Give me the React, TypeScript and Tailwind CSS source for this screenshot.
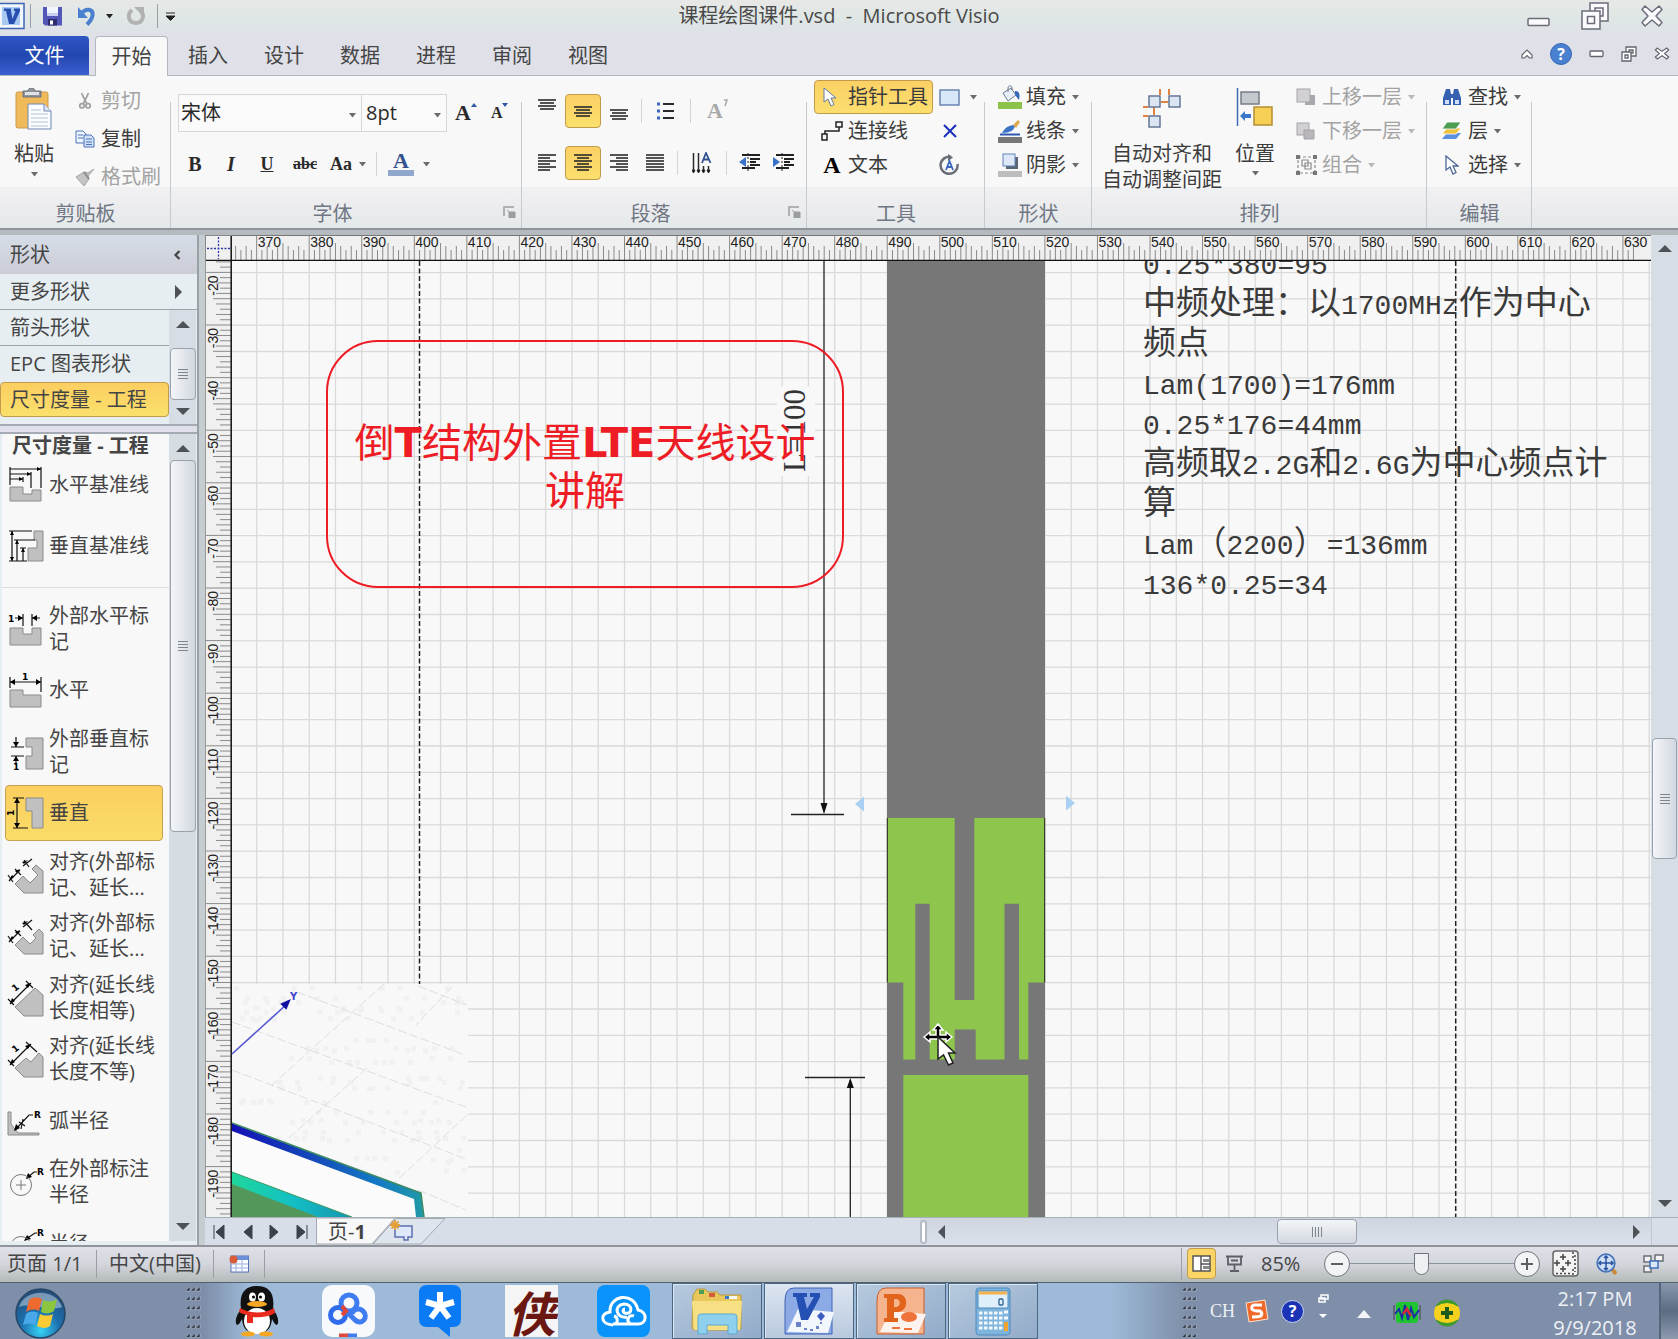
import type { ReactNode } from "react";

const uiFont = "font-['Open_Sans','Noto_Sans_CJK_SC',sans-serif]";
const serif = "'Liberation Serif', 'Noto Sans CJK SC', serif";

const H_UNIT = 5.255;
const V_UNIT = 5.26;
const rulerX = (v: number) => 309.2 + (v - 380) * H_UNIT;
const rulerY = (v: number) => 272.4 + (v - 20) * V_UNIT;
const range = (from: number, to: number) => Array.from({ length: to - from + 1 }, (_, i) => from + i);
const tickLength = (v: number) => (v % 10 === 0 ? 26 : v % 5 === 0 ? 18 : v % 2 === 0 ? 15 : 11);

function Caret({ className = "text-[#6b6b6b]" }: { className?: string }) {
  return (
    <svg width="7" height="5" viewBox="0 0 7 5" className={className}>
      <path d="M0 0H7L3.5 4.5Z" fill="currentColor" />
    </svg>
  );
}

function Arrow({ dir }: { dir: "up" | "down" | "left" | "right" }) {
  const paths = {
    up: "M0 10L7 3L14 10Z",
    down: "M0 4L7 11L14 4Z",
    left: "M10 0L3 7L10 14Z",
    right: "M4 0L11 7L4 14Z",
  };
  return (
    <svg width="14" height="14" viewBox="0 0 14 14" className="shrink-0">
      <path d={paths[dir]} fill="#4e5156" />
    </svg>
  );
}

/* ---------- title bar and tabs ---------- */

function TitleBar() {
  return (
    <header className="relative flex h-9 shrink-0 items-start justify-between bg-linear-to-b from-[#e8e8e6] via-[#dfe7e5] to-[#dfe0e8]">
      <div className="flex h-8 items-center">
        <svg width="26" height="28" viewBox="0 0 26 28">
          <rect x="-2" y="1.5" width="26" height="25" fill="#f3f7fd" stroke="#3c66b4" strokeWidth="1.5" />
          <rect x="2" y="5" width="18" height="18" fill="#a9c8f2" />
          <path d="M4 6.500H11V9L12.500 17L15.500 9H14V6.500H20V9L14 22H9L6 9H4Z" fill="#274fb0" />
        </svg>
        <span className="ml-1 h-6 w-px bg-[#9a9da3]" />
        <button type="button" aria-label="Save" className="ml-3">
          <svg width="19" height="20" viewBox="0 0 19 20">
            <path d="M0 1H19V19.500H2L0 17.500Z" fill="#5357b8" />
            <rect x="4" y="1" width="11" height="9" fill="#f4f6fd" />
            <rect x="4" y="7" width="11" height="3" fill="#c9cff0" />
            <rect x="5" y="13" width="9" height="6.500" fill="#2c2c6e" />
            <rect x="7" y="14.500" width="3" height="4" fill="#fff" />
          </svg>
        </button>
        <button type="button" aria-label="Undo" className="ml-4">
          <svg width="18" height="20" viewBox="0 0 18 20">
            <path d="M3.500 7.500C8 1.500 15.500 3 14.500 9.500C14 13.500 11.500 16 9 18.500" fill="none" stroke="#4a80cf" strokeWidth="4" />
            <path d="M0 1V12H10Z" fill="#4a80cf" />
          </svg>
        </button>
        <span className="ml-2.5">
          <Caret className="text-[#222]" />
        </span>
        <button type="button" aria-label="Repeat" disabled className="ml-3.5">
          <svg width="18" height="20" viewBox="0 0 18 20">
            <path d="M5 4C-1 9 2 17 9 17C16 17 18 9 13.500 5" fill="none" stroke="#b2b2b2" strokeWidth="4" />
            <path d="M7 1H17V9L12 6Z" fill="#b2b2b2" />
          </svg>
        </button>
        <span className="ml-3 h-6 w-px bg-[#9a9da3]" />
        <svg width="9" height="9" viewBox="0 0 9 9" className="ml-2">
          <path d="M0 1H9M0 4H9L4.500 8.500Z" fill="#222" stroke="#222" />
        </svg>
      </div>
      <h1 className="absolute left-1/2 top-1 -translate-x-1/2 whitespace-pre text-[20px] leading-6 text-[#4a4a4a]">
        课程绘图课件.vsd&nbsp; -&nbsp; Microsoft Visio
      </h1>
      <div className="flex h-8 items-center gap-[31px] pr-3.5">
        <button type="button" aria-label="Minimize">
          <svg width="23" height="26" viewBox="0 0 23 26">
            <rect x="1" y="15.500" width="21" height="7" rx="1" fill="#fbfbfd" stroke="#6b6c7a" strokeWidth="1.500" />
          </svg>
        </button>
        <button type="button" aria-label="Restore">
          <svg width="28" height="28" viewBox="0 0 28 28" fill="#fbfbfd" stroke="#6b6c7a" strokeWidth="1.500">
            <path d="M9 1H27V19H9Z" />
            <path d="M14 6H22V14H14Z" />
            <path d="M1 9H19V27H1Z" />
            <path d="M6.500 14.500H13.500V21.500H6.500Z" />
          </svg>
        </button>
        <button type="button" aria-label="Close">
          <svg width="24" height="24" viewBox="0 0 24 24">
            <path d="M5 2L12 8L19 2L22 5.500L16 12L22 18.500L19 22L12 16L5 22L2 18.500L8 12L2 5.500Z" fill="#fbfbfd" stroke="#6b6c7a" strokeWidth="1.500" strokeLinejoin="round" />
          </svg>
        </button>
      </div>
    </header>
  );
}

const tabs = ["插入", "设计", "数据", "进程", "审阅", "视图"];

function TabRow() {
  return (
    <nav className="flex h-10 shrink-0 items-stretch justify-between border-b border-[#b3b8c0] bg-[#dfe0e8] text-[20px] text-[#454545]">
      <div className="flex">
        <button type="button" className="mr-1.5 w-[89px] rounded-tr bg-linear-to-b from-[#2f56c6] via-[#2247b0] to-[#3a5fd0] leading-none text-white">
          文件
        </button>
        <button type="button" className="-mb-px mr-0.5 w-[73px] rounded-t border border-b-0 border-[#b3b8c0] bg-[#f8f8f8] leading-none">
          开始
        </button>
        {tabs.map((tab) => (
          <button key={tab} type="button" className="w-[76px] leading-none">
            {tab}
          </button>
        ))}
      </div>
      <div className="flex items-center gap-[17px] pb-1 pr-2">
        <button type="button" aria-label="Collapse ribbon">
          <svg width="12" height="10" viewBox="0 0 12 10">
            <path d="M1 6L6 1L11 6V9H8.500L6 6.500L3.500 9H1Z" fill="#fff" stroke="#63646e" strokeWidth="1.200" />
          </svg>
        </button>
        <button type="button" aria-label="Help" className="flex h-[22px] w-[22px] items-center justify-center rounded-full border border-[#3567b5] bg-[#4a80d0] text-base font-bold leading-none text-white">
          ?
        </button>
        <svg width="15" height="8" viewBox="0 0 15 8">
          <rect x="1" y="1" width="13" height="5.500" rx="1" fill="#fff" stroke="#63646e" strokeWidth="1.300" />
        </svg>
        <svg width="16" height="16" viewBox="0 0 16 16" fill="#fff" stroke="#63646e" strokeWidth="1.300">
          <path d="M5 1H15V10H5Z" />
          <path d="M8 4H12V7H8Z" />
          <path d="M1 6H10V15H1Z" />
          <path d="M4 9H7V12H4Z" />
        </svg>
        <svg width="16" height="13" viewBox="0 0 24 24" preserveAspectRatio="none">
          <path d="M5 2L12 8L19 2L22 5.500L16 12L22 18.500L19 22L12 16L5 22L2 18.500L8 12L2 5.500Z" fill="#fff" stroke="#63646e" strokeWidth="2" />
        </svg>
      </div>
    </nav>
  );
}

/* ---------- ribbon ---------- */

function Group({ label, width, launcher, children }: { label: string; width: string; launcher?: boolean; children: ReactNode }) {
  return (
    <section className={`relative flex shrink-0 flex-col after:absolute after:bottom-0 after:right-0 after:top-[26px] after:w-px after:bg-[#c6cad0] ${width}`}>
      <div className="relative z-10 min-h-0 flex-1">{children}</div>
      <div
        className={`relative flex h-[41px] shrink-0 items-center justify-center bg-linear-to-b from-[#f0f1f3] via-[#ececee] to-[#e3e9ea] pt-3 text-[20px] leading-6 text-[#6f7684] ${launcher ? "pr-7" : ""}`}
      >
        {label}
        {launcher && (
          <svg width="13" height="12" viewBox="0 0 13 12" className="absolute bottom-2.5 right-1.5">
            <path d="M1 10V1H11" fill="none" stroke="#9a9da2" strokeWidth="1.500" />
            <path d="M6 6H12V12H6ZM4 4L8 8" fill="#9a9da2" stroke="#9a9da2" />
          </svg>
        )}
      </div>
    </section>
  );
}

function Divider() {
  return <span className="block h-6 w-px bg-[#d0d3d8]" />;
}

function SmallButton({ icon, label, caret, disabled }: { icon: ReactNode; label: string; caret?: boolean; disabled?: boolean }) {
  return (
    <button type="button" disabled={disabled} className="flex h-[34px] items-center whitespace-nowrap text-[20px] leading-6 text-[#3c3c3c] disabled:text-[#a3a3a3]">
      <span className="mr-[5px] flex w-[22px] justify-center">{icon}</span>
      {label}
      {caret && (
        <span className="ml-1.5">
          <Caret className={disabled ? "text-[#b8b8b8]" : "text-[#6b6b6b]"} />
        </span>
      )}
    </button>
  );
}

function Lines({ rows, className = "" }: { rows: [number, number, number][]; className?: string }) {
  return (
    <svg width="20" height="20" viewBox="0 0 20 20" className={className}>
      {rows.map(([y, x1, x2]) => (
        <path key={y} d={`M${x1} ${y}H${x2}`} stroke="#2a2a2a" strokeWidth="1.600" />
      ))}
    </svg>
  );
}

function ToggleIcon({ label, on, children }: { label: string; on?: boolean; children: ReactNode }) {
  return (
    <button
      type="button"
      aria-label={label}
      className={
        on
          ? "flex h-[34px] w-9 items-center justify-center rounded border border-[#c19a4c] bg-linear-to-b from-[#fbd065] to-[#fbe06c]"
          : "flex h-[34px] w-9 items-center justify-center"
      }
    >
      {children}
    </button>
  );
}

function ClipboardGroup() {
  return (
    <Group label="剪贴板" width="w-[171px]">
      <div className="flex pl-3.5 pt-1.5">
        <button type="button" className="flex w-10 flex-col items-center text-[20px] leading-6 text-[#3c3c3c]">
          <svg width="38" height="42" viewBox="0 0 38 42" className="mt-1.5">
            <rect x="1" y="4" width="32" height="36" rx="2" fill="#f0b95a" stroke="#c99a4a" />
            <path d="M8 3H13C13-1 20-1 20 3H26V9H8Z" fill="#8f949c" stroke="#6d7178" />
            <path d="M10 4H24V7H10Z" fill="#dfe3e8" />
            <path d="M13 16H29L36 23V41H13Z" fill="#fafcff" stroke="#6f86b3" />
            <path d="M29 16V23H36" fill="#dfe7f5" stroke="#6f86b3" />
            <path d="M16 22H26M16 26H33M16 30H33M16 34H33M16 38H33" stroke="#b6bfd0" />
          </svg>
          <span className="mt-3 whitespace-nowrap">粘贴</span>
          <span className="mt-1.5">
            <Caret />
          </span>
        </button>
        <div className="ml-5 flex flex-col text-[20px]">
          <div className="flex h-[38px] items-center">
            <SmallButton disabled label="剪切" icon={
              <svg width="14" height="20" viewBox="0 0 16 20" fill="none" stroke="#a0a0a0" strokeWidth="2">
                <path d="M4 1L10 13M12 1L6 13" />
                <circle cx="4.500" cy="15.500" r="2.500" />
                <circle cx="11.500" cy="15.500" r="2.500" />
              </svg>
            } />
          </div>
          <div className="flex h-[38px] items-center">
            <SmallButton label="复制" icon={
              <svg width="20" height="18" viewBox="0 0 20 18" fill="#eef4fd" stroke="#4a74bb">
                <path d="M1 1H8L11 4V13H1Z" />
                <path d="M3 5H8M3 8H8" />
                <path d="M9 5H16L19 8V17H9Z" fill="#cfe0f8" />
                <path d="M11 9H17M11 12H17M11 14.500H17" />
              </svg>
            } />
          </div>
          <div className="flex h-[38px] items-center">
            <SmallButton disabled label="格式刷" icon={
              <svg width="20" height="19" viewBox="0 0 20 19">
                <path d="M19 1L13 5L9 4L1 9L9 18L14 11L13 8Z" fill="#c4c4c4" stroke="#a6a6a6" />
                <path d="M9 4L14 11" stroke="#8e8e8e" strokeWidth="2" />
              </svg>
            } />
          </div>
        </div>
      </div>
    </Group>
  );
}

function Glyph({ label, className, children }: { label: string; className: string; children: ReactNode }) {
  return (
    <button type="button" aria-label={label} className={`flex h-8 items-center justify-center font-['Liberation_Serif',serif] leading-none text-[#2a2a2a] ${className}`}>
      {children}
    </button>
  );
}

function FontGroup() {
  return (
    <Group label="字体" width="w-[351px]" launcher>
      <div className="flex items-center pl-[7px] pt-[18px]">
        <div className="relative">
          <select aria-label="Font" className="h-[38px] w-[184px] appearance-none border border-[#d5d7dc] bg-[#fafafa] px-0.5 text-[20px] text-[#2a2a2a]">
            <option>宋体</option>
          </select>
          <span className="pointer-events-none absolute right-1.5 top-1/2">
            <Caret />
          </span>
        </div>
        <div className="relative -ml-px">
          <select aria-label="Font size" className="h-[38px] w-[86px] appearance-none border border-[#d5d7dc] bg-[#fafafa] px-1 text-[20px] text-[#2a2a2a]">
            <option>8pt</option>
          </select>
          <span className="pointer-events-none absolute right-1.5 top-1/2">
            <Caret />
          </span>
        </div>
        <Glyph label="Grow font" className="ml-2 text-[22px] font-bold">
          A
          <svg width="6" height="4" className="mb-4">
            <path d="M0 4L3 0L6 4Z" fill="#2f57a8" />
          </svg>
        </Glyph>
        <Glyph label="Shrink font" className="ml-3.5 text-base font-bold">
          A
          <svg width="6" height="4" className="mb-4">
            <path d="M0 0L3 4L6 0Z" fill="#2f57a8" />
          </svg>
        </Glyph>
      </div>
      <div className="mt-4 flex items-center pl-4">
        <Glyph label="Bold" className="w-4 text-xl font-black">B</Glyph>
        <Glyph label="Italic" className="ml-5 w-4 text-xl font-bold italic">I</Glyph>
        <Glyph label="Underline" className="ml-5 w-4 text-lg font-bold underline">U</Glyph>
        <Glyph label="Strikethrough" className="ml-[18px] w-6 text-base font-bold line-through">abc</Glyph>
        <Glyph label="Change case" className="ml-3.5 w-5 text-lg font-bold">Aa</Glyph>
        <span className="ml-2">
          <Caret />
        </span>
        <span className="ml-2.5 mr-2.5">
          <Divider />
        </span>
        <button type="button" aria-label="Font color" className="flex w-7 flex-col items-center font-['Liberation_Serif',serif] text-[22px] font-bold leading-[18px] text-[#31518f]">
          A
          <span className="h-1.5 w-[26px] bg-[#8fa8cb]" />
        </button>
        <span className="ml-2">
          <Caret />
        </span>
      </div>
    </Group>
  );
}

function ParagraphGroup() {
  return (
    <Group label="段落" width="w-[285px]" launcher>
      <div className="flex items-center pl-[7px] pt-[18px]">
        <ToggleIcon label="Align top">
          <Lines rows={[[3, 1, 19], [6, 3, 17], [9, 1, 19], [12, 3, 17]]} className="mb-2" />
        </ToggleIcon>
        <ToggleIcon label="Align middle" on>
          <Lines rows={[[6, 1, 19], [9, 3, 17], [12, 1, 19], [15, 3, 17]]} />
        </ToggleIcon>
        <ToggleIcon label="Align bottom">
          <Lines rows={[[9, 1, 19], [12, 3, 17], [15, 1, 19], [18, 3, 17]]} />
        </ToggleIcon>
        <span className="ml-1 mr-3.5">
          <Divider />
        </span>
        <svg width="18" height="20" viewBox="0 0 18 20">
          <path d="M7 3H18M7 10H18M7 17H18" stroke="#2a2a2a" strokeWidth="1.800" />
          <path d="M1 3H4M1 10H4M1 17H4" stroke="#3a66bd" strokeWidth="3" />
        </svg>
        <span className="ml-4 mr-4">
          <Divider />
        </span>
        <span className="flex items-start font-['Liberation_Serif',serif] text-[22px] font-bold leading-6 text-[#a8a8a8]">
          A
          <svg width="5" height="8" viewBox="0 0 5 8">
            <path d="M1 1H4L2 7" fill="none" stroke="#a8a8a8" strokeWidth="1.500" />
          </svg>
        </span>
      </div>
      <div className="mt-[18px] flex items-center pl-[7px]">
        <ToggleIcon label="Align left">
          <Lines rows={[[2, 1, 19], [5, 1, 13], [8, 1, 19], [11, 1, 13], [14, 1, 19], [17, 1, 13]]} />
        </ToggleIcon>
        <ToggleIcon label="Center" on>
          <Lines rows={[[2, 1, 19], [5, 4, 16], [8, 1, 19], [11, 4, 16], [14, 1, 19], [17, 4, 16]]} />
        </ToggleIcon>
        <ToggleIcon label="Align right">
          <Lines rows={[[2, 1, 19], [5, 7, 19], [8, 1, 19], [11, 7, 19], [14, 1, 19], [17, 7, 19]]} />
        </ToggleIcon>
        <ToggleIcon label="Justify">
          <Lines rows={[[2, 1, 19], [5, 1, 19], [8, 1, 19], [11, 1, 19], [14, 1, 19], [17, 1, 19]]} />
        </ToggleIcon>
        <span className="ml-1 mr-3.5">
          <Divider />
        </span>
        <svg width="20" height="22" viewBox="0 0 20 22">
          <path d="M1.500 1V20M6.500 1V20M11.500 14V20M16.500 14V20" stroke="#2a2a2a" strokeWidth="1.500" />
          <path d="M0 18H3L1.500 21ZM5 18H8L6.500 21ZM10 18H13L11.500 21ZM15 18H18L16.500 21Z" stroke="#2a2a2a" />
          <path d="M10 11L14 1L18.500 11M11.500 7.500H17" fill="none" stroke="#31518f" strokeWidth="1.800" />
        </svg>
        <span className="ml-3.5 mr-3">
          <Divider />
        </span>
        {["M0 9L7 4V14Z", "M7 9L0 4V14Z"].map((d) => (
          <svg key={d} width="22" height="20" viewBox="0 0 22 20" className="mr-3 last:mr-0">
            <path d="M3 2H21M11 6H21M11 9H17M11 12H21M3 15H16" stroke="#222" strokeWidth="2" />
            <path d="M9 0V20" stroke="#222" strokeDasharray="2 2" />
            <path d={d} fill="#3a72c8" />
          </svg>
        ))}
      </div>
    </Group>
  );
}

function ToolsGroup() {
  return (
    <Group label="工具" width="w-[178px]">
      <div className="flex pl-[7px] pt-1">
        <div className="flex w-[119px] flex-col">
          <button type="button" className="flex h-[34px] items-center whitespace-nowrap rounded-sm border border-[#c19a4c] bg-linear-to-b from-[#fbd065] to-[#fbdf6e] pl-2 text-[20px] leading-6 text-[#3c3c3c]">
            <svg width="14" height="20" viewBox="0 0 14 20" className="mr-[11px]">
              <path d="M1 1V15L5 12L8 19L11 17.500L8 11H13Z" fill="#fff" stroke="#6379a0" />
            </svg>
            指针工具
          </button>
          <span className="pl-[7px]">
            <SmallButton label="连接线" icon={
              <svg width="22" height="20" viewBox="0 0 22 20" fill="none" stroke="#222" strokeWidth="1.500">
                <path d="M1 13H6V19H1ZM15 1H21V6H15ZM4 13V10H18V6" />
              </svg>
            } />
          </span>
          <span className="pl-[7px]">
            <SmallButton label="文本" icon={<span className="font-['Liberation_Serif',serif] text-2xl font-bold text-black">A</span>} />
          </span>
        </div>
        <div className="flex flex-col items-start pl-1.5">
          <button type="button" aria-label="Rectangle" className="flex h-[34px] items-center gap-2.5">
            <svg width="21" height="17" viewBox="0 0 21 17">
              <rect x="1" y="1" width="19" height="15" fill="#d9e8f8" stroke="#5874a6" strokeWidth="1.300" />
            </svg>
            <Caret />
          </button>
          <button type="button" aria-label="Connection point" className="flex h-[34px] w-[21px] items-center justify-center">
            <svg width="14" height="14" viewBox="0 0 14 14">
              <path d="M1 1L13 13M13 1L1 13" stroke="#1a2fc0" strokeWidth="2" />
            </svg>
          </button>
          <button type="button" aria-label="Text block" className="flex h-[34px] w-[21px] items-center justify-center">
            <svg width="21" height="22" viewBox="0 0 21 22">
              <path d="M12 3A8.500 8.500 0 1 0 18.500 10" fill="none" stroke="#6a6f76" strokeWidth="2.500" />
              <path d="M9 0L14 3.500L9 7Z" fill="#6a6f76" />
              <path d="M7 16L10.500 7L14 16M8.500 13H13" fill="none" stroke="#3a66bd" strokeWidth="1.800" />
            </svg>
          </button>
        </div>
      </div>
    </Group>
  );
}

function ShapeGroup() {
  return (
    <Group label="形状" width="w-[107px]">
      <div className="flex flex-col items-start pl-3.5 pt-1">
        <SmallButton caret label="填充" icon={
          <svg width="24" height="24" viewBox="0 0 24 24" className="shrink-0">
            <rect y="17" width="24" height="7" fill="#8bc34a" />
            <path d="M5 8L13 3L18 10L10 16Z" fill="#e8eef6" stroke="#6d7b93" />
            <path d="M10 7V3C10 0 14 0 14 3V5" fill="none" stroke="#6d7b93" />
            <path d="M17 6C22 6 22 10 21 15C19 13 18 11 17 9Z" fill="#3569b8" />
          </svg>
        } />
        <SmallButton caret label="线条" icon={
          <svg width="24" height="24" viewBox="0 0 24 24" className="shrink-0">
            <rect y="18" width="24" height="6" fill="#777" />
            <path d="M2 15.500H22" stroke="#2f57b0" strokeWidth="2" />
            <path d="M4 14C7 8 12 6 17 6C17 11 12 14 4 14Z" fill="#3c73c6" />
            <path d="M15 6L20 1L22 3L18 9Z" fill="#e0a94a" />
          </svg>
        } />
        <SmallButton caret label="阴影" icon={
          <svg width="24" height="24" viewBox="0 0 24 24" className="shrink-0">
            <rect y="18" width="24" height="6" fill="#bdbdbd" />
            <rect x="8" y="4" width="12" height="12" fill="#5b6472" />
            <rect x="5" y="1" width="12" height="12" fill="#dde9f8" stroke="#5f82b8" />
          </svg>
        } />
      </div>
    </Group>
  );
}

function ArrangeGroup() {
  return (
    <Group label="排列" width="w-[335px]">
      <div className="flex pl-2.5">
        <button type="button" className="flex w-[120px] flex-col items-center pt-3 text-[20px] leading-[26px] text-[#3c3c3c]">
          <svg width="40" height="40" viewBox="0 0 40 40">
            <path d="M18 1V7M27 1V7M1 19H6M1 28H6M12 18V27M19 14H26" stroke="#e08240" strokeWidth="2" />
            <g fill="#dce6f2" stroke="#5b6f90" strokeWidth="1.400">
              <rect x="7" y="8" width="11" height="11" />
              <rect x="27" y="8" width="11" height="11" />
              <rect x="7" y="28" width="11" height="11" />
            </g>
          </svg>
          <span className="mt-[13px]">自动对齐和</span>
          <span className="whitespace-nowrap">自动调整间距</span>
        </button>
        <button type="button" className="ml-3 flex w-[42px] flex-col items-center pt-3 text-[20px] leading-[26px] text-[#3c3c3c]">
          <svg width="38" height="40" viewBox="0 0 38 40">
            <path d="M1.500 0V38" stroke="#3d6db5" strokeWidth="1.500" />
            <rect x="5" y="4" width="18" height="12" fill="#c5c9ce" stroke="#777d86" strokeWidth="1.500" />
            <rect x="18" y="19" width="18" height="18" fill="#f6cf55" stroke="#b58d31" strokeWidth="1.500" />
            <path d="M4 28L9 23V26H15V30H9V33Z" fill="#3b76c8" />
          </svg>
          <span className="mt-[13px] whitespace-nowrap">位置</span>
          <span className="mt-1">
            <Caret />
          </span>
        </button>
        <div className="ml-[19px] flex flex-col items-start pt-1">
          <SmallButton disabled caret label="上移一层" icon={
            <svg width="20" height="18" viewBox="0 0 20 18">
              <rect x="9" y="7" width="10" height="10" fill="#a9a9ad" />
              <rect x="1" y="1" width="13" height="13" fill="#d3d0d4" stroke="#a5a3a8" />
            </svg>
          } />
          <SmallButton disabled caret label="下移一层" icon={
            <svg width="20" height="18" viewBox="0 0 20 18">
              <rect x="1" y="1" width="12" height="12" fill="#d3d0d4" stroke="#a5a3a8" />
              <path d="M8 8H18V17H8Z" fill="#b9b7bc" stroke="#a5a3a8" />
            </svg>
          } />
          <SmallButton disabled caret label="组合" icon={
            <svg width="21" height="20" viewBox="0 0 21 20" fill="none" stroke="#8a8a8a" strokeWidth="1.200">
              <path d="M2 2H19V18H2Z" strokeDasharray="3 2" />
              <path d="M6 5H12V11H6ZM9 8H15V14H9Z" />
              <path d="M0 0H4V4H0ZM17 0H21V4H17ZM0 16H4V20H0ZM17 16H21V20H17Z" fill="#777" stroke="none" />
            </svg>
          } />
        </div>
      </div>
    </Group>
  );
}

function EditGroup() {
  return (
    <Group label="编辑" width="w-[105px]">
      <div className="flex flex-col items-start pl-3.5 pt-1">
        <SmallButton caret label="查找" icon={
          <svg width="20" height="18" viewBox="0 0 20 18" fill="#3561b0">
            <path d="M4 1H8L9 6V17H1V10Z" />
            <path d="M12 1H16L19 10V17H11V6Z" />
            <path d="M8 6H12V10H8Z" />
            <path d="M3 12H7V16H3ZM13 12H17V16H13Z" fill="#cfe0f8" />
          </svg>
        } />
        <SmallButton caret label="层" icon={
          <svg width="20" height="20" viewBox="0 0 20 20">
            <path d="M5 12H19L14 18H0Z" fill="#5b8fe0" />
            <path d="M5 7H19L14 13H0Z" fill="#efc23e" stroke="#fff" strokeWidth=".8" />
            <path d="M5 1H19L14 8H0Z" fill="#4f9d54" stroke="#fff" strokeWidth=".8" />
          </svg>
        } />
        <SmallButton caret label="选择" icon={
          <svg width="14" height="20" viewBox="0 0 14 20">
            <path d="M1 1V15L5 12L8 19L11 17.500L8 11H13Z" fill="#fff" stroke="#4d6796" strokeWidth="1.300" />
          </svg>
        } />
      </div>
    </Group>
  );
}

function Ribbon() {
  return (
    <div className="flex h-[154px] shrink-0 overflow-hidden border-b-2 border-[#8d9398] bg-[#f8f8f8]">
      <ClipboardGroup />
      <FontGroup />
      <ParagraphGroup />
      <ToolsGroup />
      <ShapeGroup />
      <ArrangeGroup />
      <EditGroup />
      <div className="mt-auto h-[41px] flex-1 bg-linear-to-b from-[#f0f1f3] via-[#ececee] to-[#e3e9ea]" />
    </div>
  );
}

/* ---------- shapes panel ---------- */

function OneLabel({ x, y, rotate = 0 }: { x: number; y: number; rotate?: number }) {
  return (
    <text x={x} y={y} fontSize="9" fontWeight="bold" fill="#000" stroke="none" fontFamily="DejaVu Sans, sans-serif" transform={`rotate(${rotate} ${x} ${y})`}>
      1
    </text>
  );
}

function RadiusLabel({ x, y }: { x: number; y: number }) {
  return (
    <text x={x} y={y} fontSize="9" fontWeight="bold" fill="#000" stroke="none" fontFamily="DejaVu Sans, sans-serif">
      R
    </text>
  );
}

function MasterIcon({ body, lines, heads, children }: { body: string; lines: string; heads?: string; children?: ReactNode }) {
  return (
    <svg width="38" height="38" viewBox="0 0 38 38" className="shrink-0">
      <path d={body} fill="#c0c0c0" stroke="#8a8a8a" />
      <path d={lines} fill="none" stroke="#111" strokeWidth="1.200" />
      {heads && <path d={heads} fill="#000" />}
      {children}
    </svg>
  );
}

const alignedArrows = "M3 24L6 19L8 21ZM14 13L9 15L11 17ZM22 4L16 6L18 8Z";

const dimensionMasters = [
  {
    name: "外部水平标记",
    icon: (
      <MasterIcon body="M4 18H17V24H26V18H35V35H4Z" lines="M17 4V16M26 4V16M9 8H17M26 8H34" heads="M17 8L12 5V11ZM26 8L31 5V11Z">
        <OneLabel x={2} y={12} />
      </MasterIcon>
    ),
  },
  {
    name: "水平",
    icon: (
      <MasterIcon body="M4 19H17V24H35V36H4Z" lines="M4 6V17M35 6V21M4 11H35" heads="M4 11L9 8V14ZM35 11L30 8V14Z">
        <OneLabel x={16} y={9} />
      </MasterIcon>
    ),
  },
  {
    name: "外部垂直标记",
    icon: (
      <MasterIcon body="M37 5H20V14H26V23H20V36H37Z" lines="M5 14H18M5 23H18M10 4V14M10 23V32" heads="M10 14L7 9H13ZM10 23L7 28H13Z">
        <OneLabel x={7} y={37} />
      </MasterIcon>
    ),
  },
  {
    name: "垂直",
    selected: true,
    icon: (
      <MasterIcon body="M37 4H20V17H26V34H37Z" lines="M7 4H18M7 34H22M11 4V34" heads="M11 4L8 9H14ZM11 34L8 29H14Z">
        <OneLabel x={8} y={22} rotate={-90} />
      </MasterIcon>
    ),
  },
  {
    name: "对齐(外部标记、延长...",
    icon: (
      <MasterIcon body="M37 37H18L9 28L17 20L24 27L32 19L26 13L30 9L37 15Z" lines="M3 25L14 14M2 19L7 26M9 13L15 19M17 10L26 3M18 4L23 11" heads={alignedArrows} />
    ),
  },
  {
    name: "对齐(外部标记、延长...",
    icon: (
      <MasterIcon body="M37 37H18L9 28L17 20L24 27L30 21L27 18L33 12L37 16Z" lines="M3 25L14 14M2 19L7 26M9 13L15 19M17 10L26 3M18 4L26 13" heads={alignedArrows} />
    ),
  },
  {
    name: "对齐(延长线长度相等)",
    icon: (
      <MasterIcon body="M37 37H18L9 28L29 9L37 16Z" lines="M4 25L25 4M2 20L8 26M20 2L27 9" heads="M4 25L6 19L9 22ZM25 4L19 6L22 9Z">
        <OneLabel x={9} y={13} rotate={-40} />
      </MasterIcon>
    ),
  },
  {
    name: "对齐(延长线长度不等)",
    icon: (
      <MasterIcon body="M37 37H18L9 28L20 18L25 22L33 13L37 17Z" lines="M4 25L25 4M2 20L8 26M20 2L31 12" heads="M4 25L6 19L9 22ZM25 4L19 6L22 9Z">
        <OneLabel x={9} y={13} rotate={-40} />
      </MasterIcon>
    ),
  },
  {
    name: "弧半径",
    icon: (
      <MasterIcon body="M2 10H5V22L12 31H33V33H2Z" lines="M9 28L23 13H27M13 20L19 24M17 17L15 27" heads="M8 29L10 22L14 26Z">
        <RadiusLabel x={28} y={16} />
      </MasterIcon>
    ),
  },
  {
    name: "在外部标注半径",
    icon: (
      <MasterIcon body="" lines="M21 15L28 9H31" heads="M20 16L22 10L26 14Z">
        <circle cx="15" cy="22" r="10.500" fill="none" stroke="#777" />
        <path d="M10 22H20M15 17V27" stroke="#777" />
        <RadiusLabel x={31} y={12} />
      </MasterIcon>
    ),
  },
  {
    name: "半径",
    icon: (
      <MasterIcon body="" lines="M20 14L29 8H31" heads="M18 16L21 10L25 14Z">
        <circle cx="15" cy="22" r="10.500" fill="none" stroke="#777" />
        <RadiusLabel x={31} y={11} />
      </MasterIcon>
    ),
  },
];

function Master({ name, icon, selected }: { name: string; icon: ReactNode; selected?: boolean }) {
  return (
    <li className="flex odd:h-[61px] even:h-[62px]">
      <button
        type="button"
        className={
          selected
            ? "my-[3px] ml-[3px] flex w-[158px] items-center rounded-sm border border-[#c9a04e] bg-linear-to-b from-[#fbce60] to-[#fadd68] text-left"
            : "my-[3px] ml-[3px] flex w-[158px] items-center border border-transparent text-left"
        }
      >
        {icon}
        <span className="ml-[5px] w-[108px] leading-[26px]">{name}</span>
      </button>
    </li>
  );
}

function ScrollThumb({ className, vertical }: { className: string; vertical?: boolean }) {
  return (
    <div className={`flex items-center justify-center gap-0.5 rounded-sm border border-[#9aa2ad] from-[#f3f5f8] to-[#d3d7df] ${vertical ? "flex-col bg-linear-to-r" : "bg-linear-to-b"} ${className}`}>
      {[0, 1, 2, 3].map((i) => (
        <span key={i} className={vertical ? "h-px w-2.5 bg-[#80848c]" : "h-2.5 w-px bg-[#80848c]"} />
      ))}
    </div>
  );
}

function ShapesPanel() {
  return (
    <aside className="flex w-[199px] shrink-0 flex-col overflow-hidden border-r-2 border-[#9aa1a6] bg-[#e6eef1] text-[20px] text-[#454545]">
      <h2 className="flex h-[39px] shrink-0 items-center justify-between bg-linear-to-b from-[#d6dde6] to-[#cbccd6] pl-2.5 pr-4">
        形状
        <svg width="8" height="10" viewBox="0 0 8 10">
          <path d="M6.500 1L2.500 5L6.500 9" fill="none" stroke="#444" strokeWidth="2.200" />
        </svg>
      </h2>
      <button type="button" className="flex h-9 shrink-0 items-center justify-between border-b border-[#9fa4a9] pl-2.5 pr-3">
        更多形状
        <Arrow dir="right" />
      </button>
      <div className="flex h-[114px] shrink-0">
        <div className="flex w-[169px] flex-col">
          <button type="button" className="h-9 border-b border-[#9fa4a9] pl-2.5 text-left">箭头形状</button>
          <button type="button" className="h-9 pl-2.5 text-left">EPC 图表形状</button>
          <button type="button" className="h-[35px] rounded-sm border border-[#c19a4c] bg-linear-to-b from-[#fbce60] to-[#fbe06c] pl-[9px] text-left">
            尺寸度量 - 工程
          </button>
        </div>
        <div className="flex w-[27px] flex-col items-center justify-between bg-[#d6dde5] pb-1.5 pt-2">
          <Arrow dir="up" />
          <ScrollThumb vertical className="mb-1 mt-4 w-[26px] flex-1" />
          <Arrow dir="down" />
        </div>
      </div>
      <div className="h-2.5 shrink-0 border-y-2 border-[#a5abb5] bg-[#dfe0ea]" />
      <div className="flex min-h-0 flex-1">
        <div className="w-[169px] overflow-hidden rounded-tl border-l-2 border-[#e6eef1] bg-[#f8f8f8]">
          <h3 className="h-5 pl-2.5 text-[20px] font-bold leading-6">尺寸度量 - 工程</h3>
          <ul>
            <Master
              name="水平基准线"
              icon={
                <MasterIcon body="M4 21H17V28H26V24H35V35H4Z" lines="M4 1V19M35 1V22M25 6V22M17 11V16M4 3H35M4 8H25M4 13H17" heads="M35 3L31 1V5ZM25 8L21 6V10ZM17 13L13 11V15Z" />
              }
            />
            <Master
              name="垂直基准线"
              icon={
                <MasterIcon body="M37 4H28V13H31V21H22V34H37Z" lines="M3 4H26M8 13H29M14 21H20M3 34H21M6 4V34M11 13V34M17 21V34" heads="M6 4L4 8H8ZM11 13L9 17H13ZM17 21L15 25H19ZM6 34L4 30H8Z" />
              }
            />
          </ul>
          <hr className="my-2.5 border-[#dcdcdc]" />
          <ul>
            {dimensionMasters.map((master, i) => (
              <Master key={i} {...master} />
            ))}
          </ul>
        </div>
        <div className="flex w-[27px] flex-col items-center bg-[#d6dde2] pb-2 pt-2">
          <Arrow dir="up" />
          <ScrollThumb vertical className="mt-1 h-[372px] w-[26px]" />
          <span className="flex-1" />
          <Arrow dir="down" />
        </div>
      </div>
      <div className="h-1 shrink-0" />
    </aside>
  );
}

/* ---------- drawing area ---------- */

function HorizontalRuler() {
  return (
    <svg className="h-[26px] min-w-0 flex-1 bg-[#f0f0f0]">
      <g transform="translate(-232 -235)">
        {range(366, 632).map((v) => (
          <path key={v} d={`M${rulerX(v)} 261V${261 - tickLength(v)}`} stroke="#8a8a8a" />
        ))}
        {range(37, 63).map((n) => (
          <text key={n} x={rulerX(n * 10) + 1} y={247} fontSize="14" fill="#222" fontFamily="Liberation Sans, sans-serif">
            {n * 10}
          </text>
        ))}
        <path d="M0 260.500H3000" stroke="#111" strokeWidth="1.500" />
        <path d="M0 235.500H3000" stroke="#777" />
      </g>
    </svg>
  );
}

function VerticalRuler() {
  return (
    <svg className="h-full w-[27px] shrink-0 bg-[#f0f0f0]">
      <g transform="translate(-205 -261)">
        {range(18, 199).map((v) => (
          <path key={v} d={`M231 ${rulerY(v)}H${231 - tickLength(v)}`} stroke="#8a8a8a" />
        ))}
        {range(2, 19).map((n) => (
          <text key={n} x={218} y={rulerY(n * 10) + 3} textAnchor="end" fontSize="14" fill="#222" fontFamily="Liberation Sans, sans-serif" transform={`rotate(-90 218 ${rulerY(n * 10) + 3})`}>
            -{n * 10}
          </text>
        ))}
        <path d="M231.200 0V3000" stroke="#111" strokeWidth="1.500" />
        <path d="M205.500 0V3000" stroke="#999" />
      </g>
    </svg>
  );
}

function Grid() {
  return (
    <g stroke="#dadada" strokeWidth="1.300">
      {range(0, 54).map((i) => (
        <path key={i} d={`M${rulerX(370 + i * 5)} 261V1400`} />
      ))}
      {range(0, 36).map((i) => (
        <path key={i} d={`M232 ${272.6 + i * 26.3}H1800`} />
      ))}
    </g>
  );
}

const specks = range(0, 170).map((i) => ({ x: 234 + ((i * 89) % 229), y: 986 + ((i * 53 + i * i * 7) % 190) }));

function SimulationPicture() {
  return (
    <g>
      <defs>
        <linearGradient id="edge" x1="0" x2="1">
          <stop offset="0" stopColor="#1310b5" />
          <stop offset=".4" stopColor="#1447b8" />
          <stop offset=".75" stopColor="#1478c4" />
          <stop offset="1" stopColor="#1f9aa6" />
        </linearGradient>
        <linearGradient id="rim" x1="0" x2="1">
          <stop offset="0" stopColor="#1fd79b" />
          <stop offset=".5" stopColor="#13c0c4" />
          <stop offset="1" stopColor="#1793b0" />
        </linearGradient>
      </defs>
      <rect x="232" y="984" width="236" height="240" fill="#f8f8f8" />
      {specks.map((s, i) => (
        <rect key={i} x={s.x} y={s.y} width="5" height="5" fill="#f1f1f1" />
      ))}
      <path
        d="M232 1022L466 1107M297 992L465 1055M232 1070L466 1159M418 986L467 1005M418 1190L466 1210M384 984L272 1085M452 987L416 1025M367 1068L280 1146M467 1115L376 1200"
        stroke="#dedede"
        strokeDasharray="9 3"
        fill="none"
      />
      <path d="M232 1054L287 1004" stroke="#5557cf" strokeWidth="1.600" />
      <path d="M289 1001L282 1004L286 1008Z" fill="#1210a0" stroke="#1210a0" strokeWidth="2" />
      <text x="290" y="1000" fontSize="10" fontWeight="bold" fill="#4448cc" fontFamily="DejaVu Sans, sans-serif">Y</text>
      <path d="M232 1131V1172L352 1217H416L414 1199Z" fill="#fbfbfb" />
      <path d="M232 1123L421 1193L424 1217H416L414 1199L232 1131Z" fill="url(#edge)" />
      <path d="M232 1123L421 1193L424 1217" fill="none" stroke="#3f8a62" strokeWidth="1.500" />
      <path d="M232 1183L320 1217H232Z" fill="#53975a" />
      <path d="M232 1172L352 1217H318L232 1184Z" fill="url(#rim)" />
      <path d="M232 1172L352 1217" stroke="#3f9a62" />
    </g>
  );
}

const notes = [
  "0.25*380=95",
  "中频处理：以1700MHz作为中心",
  "频点",
  "Lam(1700)=176mm",
  "0.25*176=44mm",
  "高频取2.2G和2.6G为中心频点计",
  "算",
  "Lam（2200）=136mm",
  "136*0.25=34",
];

/* latin runs are set in a half-width face, next to full-width characters */
function NoteLine({ text }: { text: string }) {
  const runs = text.match(/[\x20-\x7e]+|[^\x20-\x7e]+/g) ?? [];
  return (
    <p className="h-10">
      {runs.map((run, i) =>
        /[\x20-\x7e]/.test(run) ? (
          <span key={i} className="font-['Liberation_Mono',monospace] text-[28px]">
            {run}
          </span>
        ) : (
          run
        ),
      )}
    </p>
  );
}

function LatinBold({ children }: { children: ReactNode }) {
  return <b className="font-['DejaVu_Sans',sans-serif] leading-none">{children}</b>;
}

function Canvas() {
  return (
    <div className="relative min-h-0 min-w-0 flex-1 overflow-hidden bg-[#f8f8f8]">
      <svg className="absolute inset-0 h-full w-full">
        <g transform="translate(-232 -261)">
          <Grid />
          <SimulationPicture />
          <path d="M419.500 261V984M1455.700 261V1400" stroke="#222" strokeWidth="1.500" strokeDasharray="5 2.500" />

          {/* antenna board */}
          <path d="M887 261H1045V1400H887Z" fill="#777" />
          <path d="M887 818H954.700V1000H974.300V818H1045V982.500H1028.300V1059.500H1019V903.700H1004.500V1059.500H975.700V1029.500H954.700V1059.500H929.700V903.700H915.300V1059.500H903.300V982.500H887Z" fill="#8ec54c" />
          <path d="M903.300 1075H1028.300V1400H903.300Z" fill="#8ec54c" />
          <path d="M887.300 818V982.500M1044.700 818V982.500" stroke="#222" />

          {/* dimension lines */}
          <path d="M824 261V812M791 814.500H844M850.300 1080V1400M805 1077.500H865" stroke="#222" strokeWidth="1.300" />
          <path d="M824 814L820.500 803H827.500ZM850.300 1078L846.800 1088H853.800Z" fill="#111" />
          <path d="M855 804L864 796.500V811.500ZM1075 803L1066 795.500V810.500Z" fill="#a9cff2" />
          <rect x="777" y="386" width="38" height="90" fill="#f8f8f8" />
          <text x="805" y="472" fontSize="31" fill="#333" fontFamily={serif} transform="rotate(-90 805 472)">
            L=100
          </text>

          {/* pointer with move arrows */}
          <g transform="translate(938 1037)">
            <path d="M-14 0L-8 -5V-2H-2V-7H-5L0 -13L5 -7H2V-2H8V-5L14 0L8 5V2H-8V5Z" fill="#000" stroke="#fff" strokeWidth="1.500" />
            <path d="M0 0V22L5.500 18L10.500 28L15 26L10.500 16H17Z" fill="#fff" stroke="#222" strokeWidth="1.500" />
          </g>
        </g>
      </svg>

      <div className="absolute left-[911px] top-[-21px] whitespace-nowrap font-['Noto_Sans_CJK_SC',sans-serif] text-[33px] leading-10 text-[#3a3a3a]">
        {notes.map((line) => (
          <NoteLine key={line} text={line} />
        ))}
      </div>

      <div className="absolute left-[94px] top-[79px] flex h-[248px] w-[518px] items-center justify-center rounded-[52px] border-2 border-[#ee1c25] text-center font-['Noto_Sans_CJK_SC',sans-serif] text-[40px] leading-[48px] text-[#ee1c25]">
        <p>
          倒<LatinBold>T</LatinBold>结构外置<LatinBold>LTE</LatinBold>天线设计
          <br />
          讲解
        </p>
      </div>
    </div>
  );
}

function PageStrip() {
  return (
    <div className="flex h-7 shrink-0 items-center border-t border-[#a9afb6] bg-[#d8dee7]">
      <div className="flex w-[111px] items-center justify-between px-[7px]">
        {["M2 0V14M12 0L4 7L12 14Z", "M12 0L4 7L12 14Z", "M3 0L11 7L3 14Z", "M12 0V14M2 0L10 7L2 14Z"].map((d) => (
          <svg key={d} width="14" height="14" viewBox="0 0 14 14">
            <path d={d} fill="#3c4148" stroke="#3c4148" />
          </svg>
        ))}
      </div>
      <div className="relative flex h-full items-center">
        <svg width="132" height="27" viewBox="0 0 132 27">
          <path d="M57 26L80 0.500H129L105 26Z" fill="#dfe5ed" stroke="#a3a9b2" />
          <path d="M0.500 0V26H56L79 0Z" fill="#f8f8f8" stroke="#a3a9b2" />
          <path d="M79 8H96V19H92V22H88V19H79Z" fill="#dde8fb" stroke="#5b6fae" strokeWidth="1.500" />
          <path d="M79 2V12M74 7H84M75.500 3.500L82.500 10.500M82.500 3.500L75.500 10.500" stroke="#e3a038" strokeWidth="1.800" />
        </svg>
        <button type="button" className="absolute left-3 top-0 text-[20px] leading-[27px] text-[#454545]">
          页-<b>1</b>
        </button>
      </div>
      <span className="flex-1" />
      <div className="flex h-full basis-[731px] items-center bg-linear-to-b from-[#cfd5df] to-[#dbe1ea]">
        <span className="h-6 w-[7px] rounded-sm border-2 border-[#b4bac4] bg-white" />
        <span className="ml-2">
          <Arrow dir="left" />
        </span>
        <span className="flex-1" />
        <ScrollThumb className="mr-[272px] h-[25px] w-20" />
        <Arrow dir="right" />
        <span className="w-2" />
      </div>
      <span className="h-full w-[27px] border-l border-[#c3c8d0]" />
    </div>
  );
}

function DrawingWindow() {
  return (
    <main className="flex min-w-0 flex-1 flex-col">
      <div className="flex min-h-0 flex-1">
        <div className="flex min-w-0 flex-1 flex-col">
          <div className="flex shrink-0">
            <svg width="27" height="26" className="shrink-0 bg-[#f0f0f0]">
              <path d="M13.500 2V24M2 13.500H25" stroke="#2b35a8" strokeDasharray="2 1.500" strokeWidth="1.300" />
              <path d="M0 25.500H27M26.200 0V26" stroke="#111" strokeWidth="1.500" />
              <path d="M0 .5H27M.5 0V26" stroke="#888" />
            </svg>
            <HorizontalRuler />
          </div>
          <div className="flex min-h-0 flex-1">
            <VerticalRuler />
            <Canvas />
          </div>
        </div>
        <div className="flex w-[27px] shrink-0 flex-col items-center bg-[#d6dde4] py-[7px]">
          <Arrow dir="up" />
          <span className="flex-[483]" />
          <ScrollThumb vertical className="h-[121px] w-[25px]" />
          <span className="flex-[337]" />
          <Arrow dir="down" />
        </div>
      </div>
      <PageStrip />
    </main>
  );
}

/* ---------- status bar ---------- */

function StatusBar() {
  return (
    <footer className="flex h-[37px] shrink-0 items-center border-t-2 border-[#8f959b] bg-linear-to-b from-[#dfe0e8] via-[#d3d5dc] to-[#b3bab9] pb-0.5 text-[20px] leading-6 text-[#454545]">
      <span className="w-24 whitespace-nowrap pl-[7px]">页面 1/1</span>
      <span className="h-7 w-px bg-[#9a9fa5]" />
      <span className="w-[116px] whitespace-nowrap pl-3">中文(中国)</span>
      <span className="h-7 w-px bg-[#9a9fa5]" />
      <svg width="20" height="18" viewBox="0 0 20 18" className="mx-[15px]">
        <rect x="2" y="1" width="17.500" height="16" fill="#fbfcff" stroke="#5570b5" />
        <path d="M2 1H19.500V5H2Z" fill="#6b8fd8" />
        <path d="M2 9H19M2 13H19M7 5V17M13 5V17" stroke="#9fb0dc" />
        <circle cx="4.500" cy="4.500" r="4" fill="#d95b3a" />
      </svg>
      <span className="h-7 w-px bg-[#9a9fa5]" />
      <span className="flex-1" />
      <span className="mr-[5px] h-8 w-px bg-[#9a9fa5]" />
      <button type="button" aria-label="Normal view" className="flex h-[31px] w-[29px] items-center justify-center rounded-sm border border-[#c19a4c] bg-[#fbd566]">
        <svg width="19" height="17" viewBox="0 0 19 17">
          <rect x="1" y="1" width="17" height="15" fill="#fff" stroke="#555" strokeWidth="1.500" />
          <path d="M9 1V16M9 9H18" stroke="#555" strokeWidth="1.500" />
          <path d="M11 4H17V7H11ZM11 11H17V14H11Z" fill="#888" />
        </svg>
      </button>
      <button type="button" aria-label="Full screen" className="ml-2.5">
        <svg width="17" height="17" viewBox="0 0 17 17" fill="none" stroke="#5c5f66" strokeWidth="1.800">
          <path d="M0 1.500H17M2 2V9.500H15V2M5 5.500H12M8.500 9.500V15M4 16H13" />
        </svg>
      </button>
      <span className="ml-[18px] w-[63px]">85%</span>
      <button type="button" aria-label="Zoom out" className="flex h-[26px] w-[26px] items-center justify-center rounded-full border border-[#6f747b] bg-[#f2f3f5]">
        <span className="h-0.5 w-3 bg-[#5c5f66]" />
      </button>
      <input
        type="range"
        aria-label="Zoom"
        min={0}
        max={100}
        defaultValue={43}
        className="h-6 w-[164px] appearance-none bg-[linear-gradient(#8a929e,#8a929e)] bg-[length:100%_1px] bg-center bg-no-repeat [&::-webkit-slider-thumb]:h-[22px] [&::-webkit-slider-thumb]:w-[15px] [&::-webkit-slider-thumb]:appearance-none [&::-webkit-slider-thumb]:rounded-b-lg [&::-webkit-slider-thumb]:border [&::-webkit-slider-thumb]:border-[#6f747b] [&::-webkit-slider-thumb]:bg-[#eef0f3]"
      />
      <button type="button" aria-label="Zoom in" className="flex h-[26px] w-[26px] items-center justify-center rounded-full border border-[#6f747b] bg-[#f2f3f5]">
        <svg width="14" height="14">
          <path d="M7 1V13M1 7H13" stroke="#5c5f66" strokeWidth="2" />
        </svg>
      </button>
      <button type="button" aria-label="Fit page" className="ml-3">
        <svg width="27" height="27" viewBox="0 0 27 27" fill="none" stroke="#444" strokeWidth="1.500">
          <rect x="1" y="1" width="25" height="25" rx="3" fill="#f3f3f3" stroke="#666" />
          <path d="M11 4V10M8 7H14M5 10V16M2 13H8M11 16V22M8 19H14M16 10V16M13 13H19" />
          <path d="M20 3H24M20 7H24M20 20H24M20 24H24M23 5V22M4 23.500H19" strokeDasharray="2 2" />
        </svg>
      </button>
      <button type="button" aria-label="Pan and zoom" className="ml-[17px]">
        <svg width="21" height="22" viewBox="0 0 21 22">
          <path d="M16 16L20 21" stroke="#c98a3a" strokeWidth="4" />
          <circle cx="10" cy="10" r="8.800" fill="#cfe0f6" stroke="#4a74bb" strokeWidth="1.800" />
          <path d="M10 3V17M3 10H17M8 5L10 3L12 5M8 15L10 17L12 15M5 8L3 10L5 12M15 8L17 10L15 12" fill="none" stroke="#2a52a0" strokeWidth="1.500" />
        </svg>
      </button>
      <button type="button" aria-label="Switch windows" className="ml-[26px] mr-3.5">
        <svg width="21" height="20" viewBox="0 0 21 20" fill="#f3f3f5" stroke="#6b6f76" strokeWidth="1.500">
          <path d="M1 2H8V8H1ZM12 1H20V7H12ZM1 12H8V18H1Z" />
          <path d="M7 7H15V14H7Z" fill="#dce8fa" stroke="#3e70bf" />
        </svg>
      </button>
    </footer>
  );
}

/* ---------- taskbar ---------- */

function Grip() {
  return (
    <svg width="16" height="56" viewBox="0 0 16 56">
      {range(0, 5).map((r) =>
        [0, 1, 2].map((c) => <path key={`${r}-${c}`} d={`M${c * 5} ${8 + r * 9.3}H${c * 5 + 4}V${4 + r * 9.3}`} fill="#2c3440" stroke="#dfe5ee" strokeWidth=".4" />),
      )}
    </svg>
  );
}

function TaskButton({ label, active, children }: { label: string; active?: boolean; children: ReactNode }) {
  return (
    <button
      type="button"
      aria-label={label}
      className={`flex h-full w-[90px] items-center justify-center border border-[#4c6580] shadow-[inset_1px_1px_0_#dbe7f3] ${active ? "bg-linear-to-b from-[#dce5f1] to-[#b9c9de]" : "bg-linear-to-br from-[#b7cade] to-[#92abc9]"}`}
    >
      {children}
    </button>
  );
}

function Taskbar() {
  return (
    <div className="flex h-[57px] shrink-0 items-center overflow-hidden border-t border-[#51616f] bg-[linear-gradient(90deg,#7f8fa9_0,#7f8fa9_205px,#9dbbd9_250px,#9dbbd9_1110px,#7f8fa9_1185px)]">
      <button type="button" aria-label="Start" className="ml-[15px] mr-[120px] mt-1">
        <svg width="51" height="51" viewBox="0 0 51 51">
          <defs>
            <radialGradient id="orb" cy=".85" r=".8">
              <stop offset="0" stopColor="#35d2f5" />
              <stop offset=".5" stopColor="#1c6fae" />
              <stop offset="1" stopColor="#234e7b" />
            </radialGradient>
          </defs>
          <circle cx="25.500" cy="25.500" r="24.500" fill="url(#orb)" stroke="#274766" strokeWidth="1.500" />
          <path d="M4 19C10 0 41 0 47 19C35 24 16 14 4 19Z" fill="#fff" opacity=".4" />
          <path d="M14 12C19 8 23 9 27 11L24 23C20 21 16 21 11 24Z" fill="#ee6a2f" />
          <path d="M28 12C33 14 38 14 42 11L39 23C35 26 30 26 26 24Z" fill="#8cc63f" />
          <path d="M11 26C15 23 19 23 23 25L20 37C16 35 12 35 8 37Z" fill="#49a8e8" />
          <path d="M25 26C29 28 34 28 38 26L35 38C31 41 26 40 22 38Z" fill="#fccb34" />
        </svg>
      </button>
      <Grip />
      <button type="button" aria-label="QQ" className="ml-[33px]">
        <svg width="44" height="52" viewBox="0 0 44 52">
          <path d="M6 24C0 32 0 38 2 40C4 40 6 36 7 34C8 42 10 48 22 48C34 48 36 42 37 34C38 36 40 40 42 40C44 38 44 32 38 24C40 8 34 1 22 1C10 1 4 8 6 24Z" fill="#111" />
          <ellipse cx="22" cy="36" rx="13" ry="13" fill="#fff" />
          <ellipse cx="17.500" cy="12" rx="3.500" ry="4.500" fill="#fff" />
          <ellipse cx="26.500" cy="12" rx="3.500" ry="4.500" fill="#fff" />
          <circle cx="18.500" cy="12" r="1.500" />
          <circle cx="25.500" cy="12" r="1.500" />
          <ellipse cx="22" cy="19" rx="10" ry="3" fill="#f5a623" />
          <path d="M5 23C15 29 29 29 39 23L40 28C34 32 24 33 18 32V38H12V30C8 29 5 28 4 27Z" fill="#e92a1d" />
          <ellipse cx="13" cy="49" rx="7" ry="2.500" fill="#f5a623" />
          <ellipse cx="31" cy="49" rx="7" ry="2.500" fill="#f5a623" />
        </svg>
      </button>
      <button type="button" aria-label="Cloud drive" className="ml-[43px]">
        <svg width="53" height="52" viewBox="0 0 53 52" fill="none" strokeWidth="5">
          <rect width="53" height="52" rx="10" fill="#f8f9fc" />
          <circle cx="27" cy="18" r="8" stroke="#3f7cf0" />
          <circle cx="16" cy="30" r="7.500" stroke="#2f6bea" />
          <path d="M21 23L33 35C40 41 47 32 41 26C36 22 31 25 30 29" stroke="#3f7cf0" />
          <path d="M20 21L24 26L20 30" stroke="#e0493a" strokeWidth="4" />
          <path d="M17 51H27" stroke="#e0493a" />
          <path d="M26 51H35" stroke="#3f7cf0" />
        </svg>
      </button>
      <button type="button" aria-label="Messenger" className="ml-[43px]">
        <svg width="44" height="52" viewBox="0 0 44 52">
          <path d="M9 0H35Q43 0 43 8V34Q43 42 35 42H32V52L20 42H9Q1 42 1 34V8Q1 0 9 0Z" fill="#0a7bf5" />
          <path d="M22 7V21M22 21L8 17M22 21L36 17M22 21L13 33M22 21L31 33" stroke="#fff" strokeWidth="6" />
        </svg>
      </button>
      <button type="button" aria-label="侠" className="ml-[43px] flex h-[52px] w-[53px] items-center justify-center overflow-hidden bg-[#f5f5f5] font-['Noto_Sans_CJK_SC',sans-serif] text-[48px] font-bold italic leading-none text-[#6b1813]">
        侠
      </button>
      <button type="button" aria-label="Cloud" className="ml-[39px]">
        <svg width="53" height="52" viewBox="0 0 53 52" fill="none" stroke="#fff" strokeWidth="3">
          <rect width="53" height="52" rx="8" fill="#0a94fb" stroke="none" />
          <path d="M16 40C4 40 2 28 13 27C12 10 37 6 41 25C51 27 50 39 41 39H16C22 39 21 32 17 31M34 39C28 36 32 29 37 31M30 32C19 34 16 20 27 19C36 19 36 30 28 28C25 27 26 24 28 24" />
        </svg>
      </button>
      <div className="ml-[22px] flex h-full gap-0.5">
        <TaskButton label="Explorer">
          <svg width="52" height="48" viewBox="0 0 52 48">
            <path d="M2 8L6 2H14L17 5H26L29 8H50V40Q50 43 47 43H4Q1 43 1 40Z" fill="#e8c75c" stroke="#b9983f" />
            <path d="M8 3H13V7H8Z" fill="#4f9d54" />
            <path d="M18 6H24V10H18Z" fill="#d65b3a" />
            <path d="M34 9H46V12H34Z" fill="#f6f6f6" />
            <path d="M34 9H38V12H34Z" fill="#3a7bc8" />
            <path d="M1 14H51L49 43H3Z" fill="#f7df83" />
            <path d="M7 47V30Q7 27 10 27H43Q46 27 46 30V47H37V38H16V47Z" fill="#8fd0ee" stroke="#5da9d0" />
          </svg>
        </TaskButton>
        <TaskButton label="Visio" active>
          <svg width="50" height="48" viewBox="0 0 50 48">
            <path d="M10 1H48V47H1V14Q1 1 10 1Z" fill="#8caae6" stroke="#4062b5" />
            <path d="M14 22L50 25L44 46L3 45Z" fill="#f2f6fd" />
            <path d="M9 6H23V10H20L23 22L30 10H26V6H36V10L24 33H17L12 10H9Z" fill="#2450b3" />
            <path d="M37 25L41 29L37 34L33 29Z" fill="#3d5cc0" />
            <path d="M12 35H17V40H12ZM20 41H23V43H20ZM26 42H29V44H26ZM32 39H35V42H32ZM36 35H38V37H36Z" fill="#6d83c9" />
          </svg>
        </TaskButton>
        <TaskButton label="PowerPoint">
          <svg width="50" height="48" viewBox="0 0 50 48">
            <path d="M10 1H48V47H1V14Q1 1 10 1Z" fill="#f6b48e" stroke="#cb5c2c" />
            <path d="M14 24L50 27L42 46L4 45Z" fill="#fdf3ee" />
            <path d="M8 7H22C33 7 33 24 22 25H18V31H22V35H8V31H11V11H8ZM18 12V20H20C25 20 25 12 20 12Z" fill="#e2631b" fillRule="evenodd" />
            <ellipse cx="33" cy="30" rx="8" ry="5" fill="#ee7239" />
            <path d="M16 41H24M28 42H36" stroke="#ee7239" strokeWidth="2" />
          </svg>
        </TaskButton>
        <TaskButton label="Calculator">
          <svg width="36" height="49" viewBox="0 0 36 49">
            <rect x="1" y="1" width="34" height="47" rx="3" fill="#7fb4dc" stroke="#4d8abd" />
            <rect x="3" y="4" width="30" height="17" fill="#dff0fb" stroke="#4d8abd" />
            <path d="M4 6H32" stroke="#f3b24c" strokeWidth="3" />
            <rect x="24" y="12" width="4" height="6" rx="1" fill="none" stroke="#29618f" strokeWidth="1.300" />
            {[25, 30, 35, 40].map((y) => (
              <path key={y} d={`M4 ${y + 1}H28`} stroke="#f2f8fc" strokeWidth="3" strokeDasharray="3.500 1.500" />
            ))}
            <path d="M29 25H33M29 31H33" stroke="#f2f8fc" strokeWidth="3" />
            <rect x="29" y="35" width="4" height="9" fill="#f0a52c" />
          </svg>
        </TaskButton>
      </div>
      <span className="flex-1" />
      <Grip />
      <span className="ml-3 font-['Liberation_Serif',serif] text-lg leading-none text-[#eef1f6]">CH</span>
      <svg width="24" height="24" viewBox="0 0 24 24" className="ml-2.5">
        <path d="M1 4L20 1L23 20L4 23Z" fill="#ef6a2a" stroke="#fbe3d3" />
        <path d="M17 6H9Q6 7 7 10Q8 12 15 12Q18 14 16 17Q13 18 7 18" fill="none" stroke="#fff" strokeWidth="3" />
      </svg>
      <span className="ml-3 flex h-[23px] w-[23px] items-center justify-center rounded-full border border-[#cbd5ee] bg-[#1b34b5] text-base font-bold leading-none text-white">?</span>
      <svg width="11" height="26" viewBox="0 0 11 26" className="mb-2 ml-3.5" fill="none" stroke="#fff" strokeWidth="1.500">
        <path d="M3 1H10V5H3ZM1 4H7V8H1Z" />
        <path d="M1 20H9L5 24Z" fill="#fff" stroke="none" />
      </svg>
      <svg width="14" height="9" viewBox="0 0 14 9" className="ml-7 mt-1">
        <path d="M0 9L7 1L14 9Z" fill="#f3f5f8" />
      </svg>
      <svg width="28" height="22" viewBox="0 0 28 22" className="ml-[22px] mt-1">
        <rect x="3" y="0" width="22" height="21" rx="3" fill="#1fc52f" />
        <path d="M2 12L6 7L9 16L12 3L15 18L18 6L21 15L26 8" fill="none" stroke="#1b2fa5" strokeWidth="2" />
        <path d="M10 12L14 7L18 14" fill="none" stroke="#d7263d" strokeWidth="2.500" />
        <path d="M1 3V18M27 3V18" stroke="#444" />
      </svg>
      <svg width="28" height="28" viewBox="0 0 28 28" className="ml-3 mt-1">
        <circle cx="14" cy="14" r="13" fill="#f6d21c" />
        <path d="M3 7A13 13 0 0 1 25 7Q14 0 3 7ZM3 21A13 13 0 0 0 25 21Q14 28 3 21Z" fill="#3c9a2d" stroke="#3c9a2d" />
        <path d="M14 8V20M8 14H20" stroke="#1d5c1d" strokeWidth="4" />
      </svg>
      <div className="ml-[86px] w-[96px] pt-1 text-center text-[20px] leading-[29px] text-[#eef1f6]">
        <p>2:17 PM</p>
        <p>9/9/2018</p>
      </div>
      <button type="button" aria-label="Show desktop" className="ml-4 h-full w-[19px] border-l-2 border-[#56657a] bg-linear-to-b from-[#8897ae] via-[#5d6c82] to-[#8d9ab0]" />
    </div>
  );
}

export default function App() {
  return (
    <div className={`flex h-screen flex-col overflow-hidden bg-[#c5cdd0] ${uiFont}`}>
      <TitleBar />
      <TabRow />
      <Ribbon />
      <div className="h-[5px] shrink-0 bg-[#b4babd]" />
      <div className="flex min-h-0 flex-1">
        <ShapesPanel />
        <span className="w-1.5 shrink-0" />
        <DrawingWindow />
      </div>
      <StatusBar />
      <Taskbar />
    </div>
  );
}
